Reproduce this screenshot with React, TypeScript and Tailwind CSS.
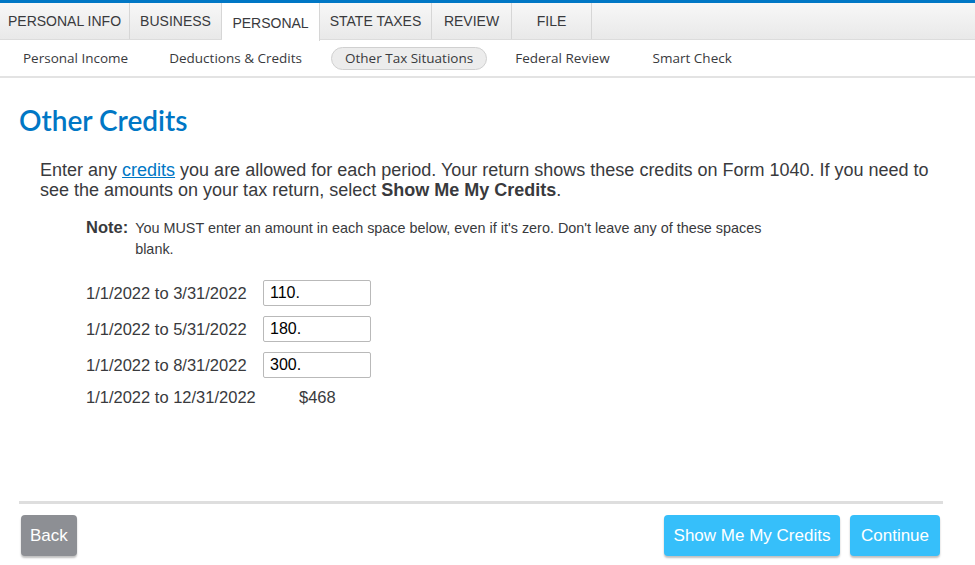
import React from 'react';

const tabs = [
  { label: 'PERSONAL INFO', w: 'w-[130px]' },
  { label: 'BUSINESS', w: 'w-[92px]' },
  { label: 'PERSONAL', w: 'w-[98px]', active: true },
  { label: 'STATE TAXES', w: 'w-[112px]' },
  { label: 'REVIEW', w: 'w-[80px]' },
  { label: 'FILE', w: 'w-[80px]' },
];

const subNav = [
  { label: 'Personal Income', ml: 'ml-[23px]' },
  { label: 'Deductions & Credits', ml: 'ml-[41px]' },
  { label: 'Other Tax Situations', ml: 'ml-[29px]', active: true },
  { label: 'Federal Review', ml: 'ml-[28px]' },
  { label: 'Smart Check', ml: 'ml-[43px]' },
];

const periods = [
  { label: '1/1/2022 to 3/31/2022', value: '110.' },
  { label: '1/1/2022 to 5/31/2022', value: '180.' },
  { label: '1/1/2022 to 8/31/2022', value: '300.' },
];

export default function App() {
  return (
    <div className="w-[975px] h-[565px] bg-white overflow-hidden font-['Liberation_Sans',Arial,sans-serif] text-[#393a3d]">
      {/* top accent */}
      <div className="h-[3px] bg-[#0077c5]" />

      {/* main tabs */}
      <div className="flex h-[37px] bg-gradient-to-b from-[#f7f7f7] to-[#e9e9e9] border-b border-[#dcdcdc]">
        {tabs.map(tab => (
          <div
            key={tab.label}
            className={`${tab.w} flex items-center justify-center border-r border-[#d6d6d6] text-[14px] ${
              tab.active ? 'bg-white h-[38px] pt-[3px]' : ''
            }`}
          >
            {tab.label}
          </div>
        ))}
      </div>

      {/* sub nav */}
      <div className="flex items-center h-[38px] pt-[1px] border-b-2 border-[#e3e3e3] font-['Open_Sans',sans-serif] text-[13.5px] text-[#393a3d]">
        {subNav.map(item => (
          <div
            key={item.label}
            className={`${item.ml} ${
              item.active
                ? 'h-[23px] px-[13px] flex items-center rounded-full bg-[#ececec] border border-[#d0d0d0]'
                : ''
            }`}
          >
            {item.label}
          </div>
        ))}
      </div>

      {/* content */}
      <div className="px-[19px] pt-[26px]">
        <h1 className="text-[28px] leading-[32px] font-semibold text-[#0077c5] font-['Lato',sans-serif]">
          Other Credits
        </h1>

        <p className="mt-[24px] ml-[21px] w-[900px] text-[18px] leading-[20px] text-[#393a3d]">
          Enter any{' '}
          <a className="text-[#0077c5] underline" href="#">
            credits
          </a>{' '}
          you are allowed for each period. Your return shows these credits on Form 1040. If you need to see the
          amounts on your tax return, select <b>Show Me My Credits</b>.
        </p>

        <div className="flex mt-[17px] ml-[67px] w-[690px]">
          <span className="text-[16.5px] font-bold leading-[20px] mr-[7px]">Note:</span>
          <span className="text-[14.4px] leading-[21px] pt-[1px]">
            You MUST enter an amount in each space below, even if it's zero. Don't leave any of these spaces blank.
          </span>
        </div>

        <div className="ml-[67px] mt-[20px] flex flex-col gap-[10px] text-[16.5px]">
          {periods.map(p => (
            <div key={p.label} className="flex items-center h-[26px]">
              <span className="w-[177px]">{p.label}</span>
              <input
                defaultValue={p.value}
                className="w-[108px] h-[26px] border border-[#b9b9b9] rounded-[2px] px-[6px] text-[16px] text-black outline-none"
              />
            </div>
          ))}
          <div className="flex items-center h-[18px]">
            <span className="w-[213px]">1/1/2022 to 12/31/2022</span>
            <span>$468</span>
          </div>
        </div>

        <div className="mt-[95px] h-[3px] bg-[#dedede] mr-[13px]" />

        <div className="flex mt-[11px] mr-[16px] ml-[2px] text-[17px] text-white">
          <button className="h-[41px] px-[9px] rounded-[4px] bg-[#8d8f94] shadow-[0_2px_2px_rgba(0,0,0,0.25)]">
            Back
          </button>
          <div className="ml-auto flex gap-[10px]">
            <button className="h-[41px] w-[176px] rounded-[4px] bg-[#36bffa] shadow-[0_2px_2px_rgba(0,0,0,0.25)]">
              Show Me My Credits
            </button>
            <button className="h-[41px] w-[90px] rounded-[4px] bg-[#36bffa] shadow-[0_2px_2px_rgba(0,0,0,0.25)]">
              Continue
            </button>
          </div>
        </div>
      </div>
    </div>
  );
}
